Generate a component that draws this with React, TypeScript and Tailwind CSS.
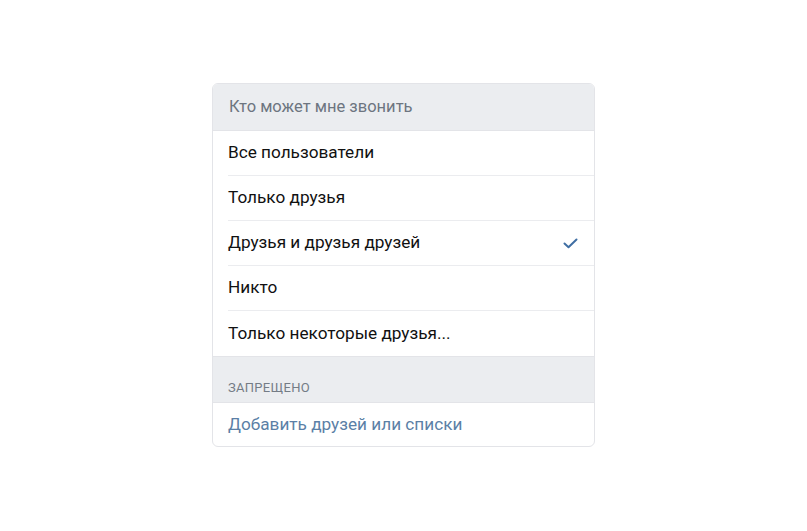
import React from "react";

const rows = [
  { label: "Все пользователи", checked: false },
  { label: "Только друзья", checked: false },
  { label: "Друзья и друзья друзей", checked: true },
  { label: "Никто", checked: false },
  { label: "Только некоторые друзья...", checked: false },
];

export default function App() {
  return (
    <div
      className="w-[807px] h-[531px] bg-white flex justify-center"
      style={{ fontFamily: "Roboto, 'Noto Sans', sans-serif" }}
    >
      <div className="mt-[83px] w-[383px] h-[364px] border border-[#e3e4e8] rounded-[6px] overflow-hidden flex flex-col">
        <div className="h-[47px] bg-[#ebedf0] flex items-center pl-[16px] text-[16.5px] text-[#6d7580] border-b border-[#e3e4e8]">
          Кто может мне звонить
        </div>
        <div className="flex flex-col pl-[15px]">
          {rows.map((r, i) => (
            <div
              key={i}
              className={`h-[45px] flex items-center justify-between pr-[15px] text-[17.2px] text-[#111] ${
                i < rows.length - 1 ? "border-b border-[#ebecef]" : ""
              }`}
            >
              <span>{r.label}</span>
              {r.checked && (
                <svg width="15" height="11" viewBox="0 0 15 11" className="mr-[1px]">
                  <path
                    d="M1.5 5.5 L5.5 9.2 L13.5 1.5"
                    fill="none"
                    stroke="#3f6ea3"
                    strokeWidth="2"
                    strokeLinecap="round"
                    strokeLinejoin="round"
                  />
                </svg>
              )}
            </div>
          ))}
        </div>
        <div className="h-[47px] bg-[#ebedf0] flex items-end pb-[5px] pl-[15px] text-[13px] text-[#747c86] tracking-[0.3px] border-y border-[#e3e4e8]">
          ЗАПРЕЩЕНО
        </div>
        <div className="flex-1 flex items-center pl-[15px] text-[17.2px] text-[#5b7fa6]">
          Добавить друзей или списки
        </div>
      </div>
    </div>
  );
}
